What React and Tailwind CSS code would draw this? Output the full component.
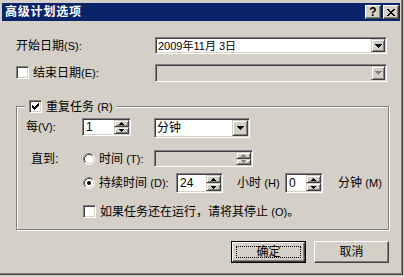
import React from "react";

const FONT = "font-['Liberation_Sans','Noto_Sans_CJK_SC',sans-serif]";
const sunken =
  "border border-t-[#808080] border-l-[#808080] border-r-white border-b-white p-[1px] shadow-[inset_1px_1px_0_#404040,inset_-1px_-1px_0_#d4d0c8]";
const smallRaised =
  "bg-[#d4d0c8] border border-t-[#d4d0c8] border-l-[#d4d0c8] border-r-[#404040] border-b-[#404040] shadow-[inset_1px_1px_0_#ffffff,inset_-1px_-1px_0_#808080]";
const btnRaised =
  "bg-[#d4d0c8] border border-t-white border-l-white border-r-[#404040] border-b-[#404040] shadow-[inset_-1px_-1px_0_#808080]";

function Down({ disabled }) {
  return (
    <svg width="7" height="4" viewBox="0 0 7 4" shapeRendering="crispEdges">
      {disabled && <path d="M2 1h5v1h-1v1h-1v1h-2z" fill="#ffffff" />}
      <path d="M0 0h7v1h-1v1h-1v1h-1v1h-1v-1h-1v-1h-1v-1h-1z" fill={disabled ? "#808080" : "#000"} />
    </svg>
  );
}

function SmallArrow({ up, disabled }) {
  const d = up ? "M2 0h1v1h1v1h1v1h-5v-1h1v-1h1z" : "M0 0h5v1h-1v1h-1v1h-1v-1h-1v-1h-1z";
  return (
    <svg width="5" height="3" viewBox="0 0 5 3" shapeRendering="crispEdges">
      <path d={d} fill={disabled ? "#808080" : "#000"} />
    </svg>
  );
}

function Check({ checked }) {
  const cols = [2, 3, 4, 3, 2, 1, 0];
  return (
    <div className={`w-[13px] h-[13px] bg-white shrink-0 ${sunken}`}>
      {checked && (
        <svg width="9" height="9" viewBox="0 0 9 9" shapeRendering="crispEdges" className="block">
          {cols.map((y, i) => (
            <rect key={i} x={i + 1} y={y + 1} width="1" height="3" fill="#000" />
          ))}
        </svg>
      )}
    </div>
  );
}

function Radio({ checked }) {
  return (
    <svg width="12" height="12" viewBox="0 0 12 12" className="shrink-0">
      <circle cx="6" cy="6" r="5" fill="#fff" />
      <path d="M2.11 9.89 A5.5 5.5 0 0 1 9.89 2.11" stroke="#808080" fill="none" strokeWidth="1" />
      <path d="M9.89 2.11 A5.5 5.5 0 0 1 2.11 9.89" stroke="#ffffff" fill="none" strokeWidth="1" />
      <path d="M2.82 9.18 A4.5 4.5 0 0 1 9.18 2.82" stroke="#404040" fill="none" strokeWidth="1" />
      <path d="M9.18 2.82 A4.5 4.5 0 0 1 2.82 9.18" stroke="#d4d0c8" fill="none" strokeWidth="1" />
      {checked && <circle cx="6" cy="6" r="2" fill="#000" />}
    </svg>
  );
}

function Spin({ className, value, disabled }) {
  return (
    <div className={`${sunken} ${className} flex shrink-0`}>
      <div className={`flex-1 flex items-center pl-[2px] ${disabled ? "bg-[#d4d0c8]" : "bg-white"}`}>{value}</div>
      <div className="w-[15px] flex flex-col">
        <div className={`flex-1 flex items-center justify-center ${smallRaised}`}>
          <SmallArrow up disabled={disabled} />
        </div>
        <div className={`flex-1 flex items-center justify-center ${smallRaised}`}>
          <SmallArrow disabled={disabled} />
        </div>
      </div>
    </div>
  );
}

function Combo({ className, value, disabled, btnW }) {
  return (
    <div className={`${sunken} ${className} flex shrink-0`}>
      <div className={`flex-1 flex items-center pl-[1px] ${disabled ? "bg-[#d4d0c8]" : "bg-white"}`}>{value}</div>
      <div className={`${btnW} flex items-center justify-center ${smallRaised}`}>
        <Down disabled={disabled} />
      </div>
    </div>
  );
}

function L({ children }) {
  return <span className="text-[11px]">{children}</span>;
}

export default function App() {
  return (
    <div className={`w-[404px] h-[277px] bg-[#d4d0c8] overflow-hidden ${FONT} text-[12px] leading-[14px] text-black`}>
      <div className="w-[403px] h-[275px] pt-[3px] pl-[2px] pr-[2px] border-r border-b border-r-[#404040] border-b-[#404040] shadow-[inset_-1px_-1px_0_#808080] flex flex-col">
        {/* Title bar */}
        <div className="h-[18px] bg-[#0a246a] flex items-center pl-[3px] pr-[1px] shrink-0">
          <span className="text-white font-bold tracking-[0.8px] text-[12px] leading-[14px]">高级计划选项</span>
          <div className="ml-auto flex gap-[2px]">
            <div className={`w-[16px] h-[14px] flex items-center justify-center ${btnRaised}`}>
              <span className="font-['Liberation_Sans',sans-serif] font-bold text-[12px] leading-[12px]">?</span>
            </div>
            <div className={`w-[16px] h-[14px] flex items-center justify-center ${btnRaised}`}>
              <svg width="8" height="7" viewBox="0 0 8 7" shapeRendering="crispEdges">
                <path d="M0 0h2v1h1v1h2v-1h1v-1h2v1h-1v1h-1v1h-1v1h1v1h1v1h1v1h-2v-1h-1v-1h-2v1h-1v1h-2v-1h1v-1h1v-1h1v-1h-1v-1h-1v-1h-1z" fill="#000" />
              </svg>
            </div>
          </div>
        </div>

        {/* Start date */}
        <div className="mt-[16px] h-[17px] flex items-center">
          <div className="ml-[14px] w-[139px]">开始日期<L>(S):</L></div>
          <Combo className="w-[232px] h-[17px]" value={<span className="text-[11px]">2009年11月 3日</span>} btnW="w-[14px]" />
        </div>

        {/* End date */}
        <div className="mt-[10px] h-[17px] flex items-center">
          <div className="ml-[14px] w-[139px] flex items-center">
            <Check />
            <span className="ml-[4px]">结束日期<L>(E):</L></span>
          </div>
          <Combo className="w-[232px] h-[18px]" value="" disabled btnW="w-[14px]" />
        </div>

        {/* Group box */}
        <div className="mt-[25px] ml-[14px] w-[373px] h-[124px] relative border border-[#808080] shadow-[inset_1px_1px_0_#ffffff,1px_1px_0_#ffffff] flex flex-col">
          <div className="absolute left-[8px] top-[-7px] px-[4px] bg-[#d4d0c8] h-[13px] flex items-center">
            <Check checked />
            <span className="ml-[4px]">重复任务 <L>(R)</L></span>
          </div>

          {/* Every */}
          <div className="mt-[11px] flex items-start">
            <div className="ml-[9px] w-[56px] h-[18px] flex items-center">每<L>(V):</L></div>
            <Spin className="w-[49px] h-[18px]" value="1" />
            <Combo className="ml-[23px] w-[96px] h-[20px]" value="分钟" btnW="w-[16px]" />
          </div>

          {/* Until: time */}
          <div className="mt-[12px] h-[17px] flex items-center">
            <div className="ml-[14px] w-[52px]">直到:</div>
            <Radio />
            <span className="ml-[4px] w-[55px]">时间 <L>(T):</L></span>
            <Spin className="w-[99px] h-[17px]" value="" disabled />
          </div>

          {/* Duration */}
          <div className="mt-[6px] h-[20px] flex items-center">
            <div className="ml-[66px]" />
            <Radio checked />
            <span className="ml-[4px] w-[77px]">持续时间 <L>(D):</L></span>
            <Spin className="w-[47px] h-[20px]" value="24" />
            <span className="ml-[14px] w-[48px]">小时 <L>(H)</L></span>
            <Spin className="w-[38px] h-[20px]" value="0" />
            <span className="ml-[15px]">分钟 <L>(M)</L></span>
          </div>

          {/* Stop checkbox */}
          <div className="mt-[12px] h-[13px] flex items-center">
            <div className="ml-[66px]" />
            <Check />
            <span className="ml-[4px]">如果任务还在运行，请将其停止 <L>(O)</L>。</span>
          </div>
        </div>

        {/* Buttons */}
        <div className="mt-[11px] flex">
          <div className="ml-[229px] w-[75px] h-[22px] border border-black">
            <div className={`w-full h-full relative flex items-center justify-center ${btnRaised}`}>
              <div className="absolute inset-[3px] border border-dotted border-black" />
              <span>确定</span>
            </div>
          </div>
          <div className={`ml-[8px] w-[75px] h-[22px] flex items-center justify-center ${btnRaised}`}>
            <span>取消</span>
          </div>
        </div>
      </div>
    </div>
  );
}
